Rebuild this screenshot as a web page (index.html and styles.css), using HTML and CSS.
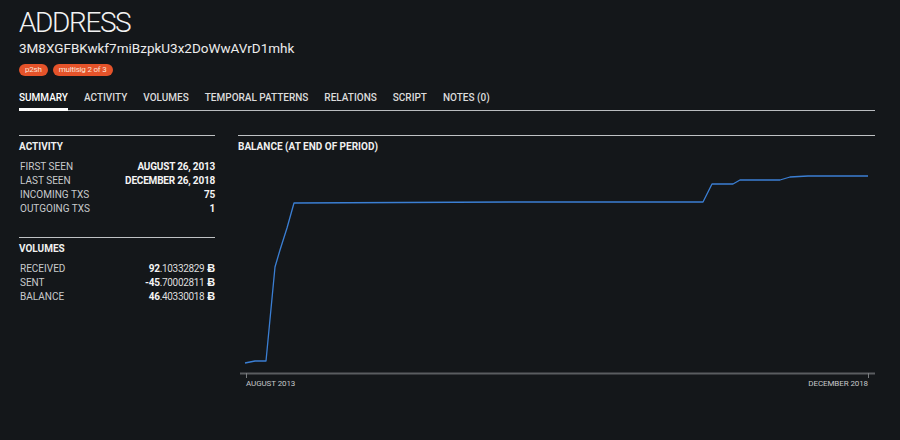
FILE: index.html
```html
<!DOCTYPE html>
<html>
<head>
<meta charset="utf-8">
<link rel="stylesheet" href="styles.css">
</head>
<body>
<header class="head">
  <h1 class="title">ADDRESS</h1>
  <div class="addr">3M8XGFBKwkf7miBzpkU3x2DoWwAVrD1mhk</div>
  <div class="badges"><span class="badge">p2sh</span><span class="badge">multisig 2 of 3</span></div>
  <nav class="tabs">
    <span class="tab active">SUMMARY</span>
    <span class="tab">ACTIVITY</span>
    <span class="tab">VOLUMES</span>
    <span class="tab">TEMPORAL PATTERNS</span>
    <span class="tab">RELATIONS</span>
    <span class="tab">SCRIPT</span>
    <span class="tab">NOTES (0)</span>
  </nav>
</header>
<main class="content">
  <aside class="side">
    <section class="panel">
      <h2 class="ptitle">ACTIVITY</h2>
      <div class="row"><span class="lbl">FIRST SEEN</span><span class="val">AUGUST 26, 2013</span></div>
      <div class="row"><span class="lbl">LAST SEEN</span><span class="val">DECEMBER 26, 2018</span></div>
      <div class="row"><span class="lbl">INCOMING TXS</span><span class="val">75</span></div>
      <div class="row"><span class="lbl">OUTGOING TXS</span><span class="val">1</span></div>
    </section>
    <section class="panel">
      <h2 class="ptitle">VOLUMES</h2>
      <div class="row"><span class="lbl">RECEIVED</span><span class="val">92<span class="dec">.10332829</span><span class="btc">Ƀ</span></span></div>
      <div class="row"><span class="lbl">SENT</span><span class="val">-45<span class="dec">.70002811</span><span class="btc">Ƀ</span></span></div>
      <div class="row"><span class="lbl">BALANCE</span><span class="val">46<span class="dec">.40330018</span><span class="btc">Ƀ</span></span></div>
    </section>
  </aside>
  <section class="panel chart">
    <h2 class="ptitle">BALANCE (AT END OF PERIOD)</h2>
    <svg class="plot" width="637" height="240" viewBox="0 0 637 240">
      <line x1="2" y1="218.5" x2="637" y2="218.5" stroke="#5a5d60" stroke-width="2"/>
      <line x1="8.5" y1="218" x2="8.5" y2="223" stroke="#7a7d80" stroke-width="1"/>
      <line x1="630.5" y1="218" x2="630.5" y2="223" stroke="#7a7d80" stroke-width="1"/>
      <polyline fill="none" stroke="#3b7fd4" stroke-width="1.3" stroke-linejoin="round"
        points="7,208 17,206 28,206 37,112 42,95 49,73 56,48 272,47 465,47 474,29 495,29 502,25 542,25 552,22 570,21 630,21"/>
      <text x="8" y="231" class="axl">AUGUST 2013</text>
      <text x="630" y="231" class="axl" text-anchor="end">DECEMBER 2018</text>
    </svg>
  </section>
</main>
</body>
</html>
```
FILE: styles.css
```css
* { box-sizing: border-box; }
html, body { margin: 0; padding: 0; }
body {
  background: #14171a;
  color: #e6e6e6;
  font-family: Roboto, "Liberation Sans", sans-serif;
  padding: 6px 25px 0 19px;
  width: 900px;
  height: 440px;
  overflow: hidden;
}
.title {
  margin: 0;
  font-size: 28px;
  font-weight: 300;
  line-height: 34px;
  color: #f2f2f2;
  letter-spacing: -1.4px;
}
.addr {
  font-size: 13.5px;
  line-height: 16px;
  color: #ececec;
}
.badges {
  display: flex;
  gap: 5px;
  margin-top: 8px;
}
.badge {
  background: #e5532a;
  color: #fbe3d9;
  font-size: 8px;
  line-height: 12px;
  height: 12px;
  padding: 0 6px;
  border-radius: 6px;
  letter-spacing: -0.2px;
}
.tabs {
  display: flex;
  gap: 16px;
  margin-top: 16px;
  border-bottom: 1px solid #b9bcbf;
}
.tab {
  font-size: 10px;
  font-weight: 500;
  color: #dcdcdc;
  line-height: 12px;
  padding-bottom: 4px;
  border-bottom: 3px solid transparent;
  margin-bottom: -1px;
}
.tab.active {
  color: #ffffff;
  border-bottom-color: #ffffff;
}
.content {
  display: flex;
  gap: 23px;
  margin-top: 24px;
}
.side {
  width: 196px;
  display: flex;
  flex-direction: column;
  gap: 21px;
}
.panel {
  border-top: 1px solid #bfc2c4;
}
.chart { flex: 1; }
.ptitle {
  margin: 0;
  font-size: 10px;
  font-weight: 700;
  color: #f0f0f0;
  line-height: 12px;
  padding-top: 5px;
  margin-bottom: 7px;
}
.row {
  display: flex;
  justify-content: space-between;
  font-size: 10px;
  line-height: 14px;
}
.lbl { color: #c8cacc; padding-left: 1px; }
.val { color: #f4f4f4; font-weight: 700; letter-spacing: -0.2px; }
.dec { font-weight: 400; color: #dddddd; font-size: 10px; letter-spacing: -0.35px; }
.btc { margin-left: 3px; font-size: 11px; }
.plot { display: block; margin-top: -5px; }
.axl {
  font-family: Roboto, "Liberation Sans", sans-serif;
  font-size: 8px;
  fill: #c6c8ca;
  letter-spacing: -0.1px;
}
```
